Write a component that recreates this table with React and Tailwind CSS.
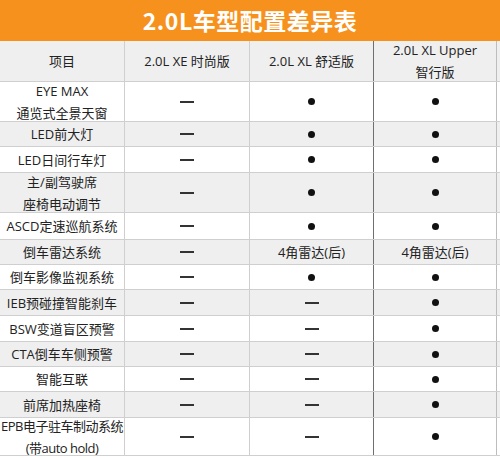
const DOT = 'dot';
const DASH = 'dash';

const rows = [
  { h: 'h-[40px]', gray: false, name: ['EYE MAX', '通览式全景天窗'], v: [DASH, DOT, DOT] },
  { h: 'h-[25px]', gray: true, name: ['LED前大灯'], v: [DASH, DOT, DOT] },
  { h: 'h-[26px]', gray: false, name: ['LED日间行车灯'], v: [DASH, DOT, DOT] },
  { h: 'h-[40px]', gray: true, name: ['主/副驾驶席', '座椅电动调节'], v: [DASH, DOT, DOT] },
  { h: 'h-[27px]', gray: false, name: ['ASCD定速巡航系统'], v: [DASH, DOT, DOT] },
  { h: 'h-[25px]', gray: true, name: ['倒车雷达系统'], v: [DASH, '4角雷达(后)', '4角雷达(后)'] },
  { h: 'h-[25px]', gray: false, name: ['倒车影像监视系统'], v: [DASH, DOT, DOT] },
  { h: 'h-[26px]', gray: true, name: ['IEB预碰撞智能刹车'], v: [DASH, DASH, DOT] },
  { h: 'h-[26px]', gray: false, name: ['BSW变道盲区预警'], v: [DASH, DASH, DOT] },
  { h: 'h-[25px]', gray: true, name: ['CTA倒车车侧预警'], v: [DASH, DASH, DOT] },
  { h: 'h-[25px]', gray: false, name: ['智能互联'], v: [DASH, DASH, DOT] },
  { h: 'h-[26px]', gray: true, name: ['前席加热座椅'], v: [DASH, DASH, DOT] },
  { h: 'h-[38px]', gray: false, tight: true, name: ['EPB电子驻车制动系统', '(带auto hold)'], v: [DASH, DASH, DOT] },
];

const cols = ['w-[125px]', 'w-[125px]', 'w-[124px]', 'w-[123px]'];
const borders = ['border-r border-[#cfcfcf]', 'border-r border-[#cfcfcf]', 'border-r border-[#6f6f6f]', 'border-r border-[#bdbdbd]'];

function Value({ v }) {
  if (v === DOT) return <span className="block w-[7px] h-[7px] rounded-full bg-[#111]" />;
  if (v === DASH) return <span className="block w-[14px] h-[2px] bg-[#333]" />;
  return <span>{v}</span>;
}

function Cell({ i, children }) {
  return (
    <div className={`${cols[i]} ${borders[i]} h-full flex flex-col items-center justify-center text-center leading-[22px]`}>
      {children}
    </div>
  );
}

export default function App() {
  return (
    <div
      className="w-[500px] h-[458px] bg-white text-[13px] text-[#222] overflow-hidden"
      style={{ fontFamily: '"Open Sans", "Noto Sans CJK SC", sans-serif' }}
    >
      <div className="h-[41px] bg-[#f7911d] flex items-center justify-center">
        <h1 className="text-white font-bold text-[23px] tracking-[0.5px]" style={{ fontFamily: '"Noto Sans CJK SC", sans-serif' }}>
          2.0L车型配置差异表
        </h1>
      </div>

      <div className="h-[41px] bg-[#efefef] flex border-b border-[#cfcfcf]">
        <Cell i={0}>项目</Cell>
        <Cell i={1}>2.0L XE 时尚版</Cell>
        <Cell i={2}>2.0L XL 舒适版</Cell>
        <Cell i={3}>
          <span>2.0L XL Upper</span>
          <span>智行版</span>
        </Cell>
      </div>

      {rows.map((r, idx) => (
        <div key={idx} className={`${r.h} flex border-b border-[#cfcfcf] ${r.gray ? 'bg-[#efefef]' : 'bg-white'}`}>
          <Cell i={0}>
            {r.name.map((n) => (
              <span key={n} className={`whitespace-nowrap ${r.tight ? 'tracking-[-0.5px]' : ''}`}>{n}</span>
            ))}
          </Cell>
          {r.v.map((v, j) => (
            <Cell key={j} i={j + 1}>
              <Value v={v} />
            </Cell>
          ))}
        </div>
      ))}
    </div>
  );
}
